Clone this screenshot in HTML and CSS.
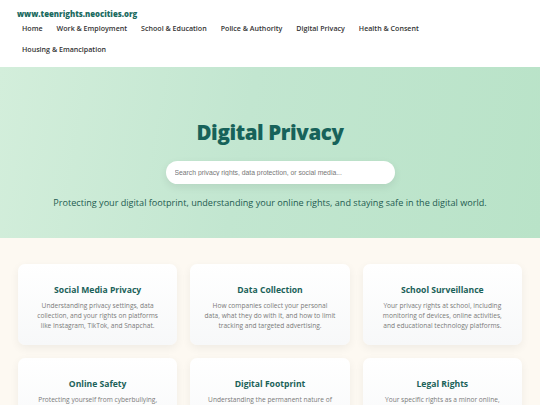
FILE: index.html
```html
<!DOCTYPE html>
<html lang="en">
<head>
<meta charset="utf-8">
<title>Digital Privacy - Teen Rights</title>
<link rel="stylesheet" href="styles.css">
</head>
<body>
<header class="site-header">
  <div class="logo">www.teenrights.neocities.org</div>
  <nav class="nav">
    <a href="#">Home</a>
    <a href="#">Work &amp; Employment</a>
    <a href="#">School &amp; Education</a>
    <a href="#">Police &amp; Authority</a>
    <a href="#">Digital Privacy</a>
    <a href="#">Health &amp; Consent</a>
    <a href="#">Housing &amp; Emancipation</a>
  </nav>
</header>
<section class="hero">
  <h1>Digital Privacy</h1>
  <div class="search"><input type="text" placeholder="Search privacy rights, data protection, or social media..."></div>
  <p class="lead">Protecting your digital footprint, understanding your online rights, and staying safe in the digital world.</p>
</section>
<main class="content">
  <div class="grid">
    <div class="card"><h3>Social Media Privacy</h3><p>Understanding privacy settings, data collection, and your rights on platforms like Instagram, TikTok, and Snapchat.</p></div>
    <div class="card"><h3>Data Collection</h3><p>How companies collect your personal data, what they do with it, and how to limit tracking and targeted advertising.</p></div>
    <div class="card"><h3>School Surveillance</h3><p>Your privacy rights at school, including monitoring of devices, online activities, and educational technology platforms.</p></div>
    <div class="card"><h3>Online Safety</h3><p>Protecting yourself from cyberbullying, online predators, scams, and other digital threats.</p></div>
    <div class="card"><h3>Digital Footprint</h3><p>Understanding the permanent nature of online content and how it can affect your future.</p></div>
    <div class="card"><h3>Legal Rights</h3><p>Your specific rights as a minor online, including COPPA protections and data deletion.</p></div>
  </div>
</main>
</body>
</html>
```
FILE: styles.css
```css
* { box-sizing: border-box; }
html, body { margin: 0; padding: 0; }
body {
  font-family: "Open Sans", "DejaVu Sans", sans-serif;
  background: #fdf9f2;
  color: #333;
}
.site-header {
  background: #fff;
  height: 67px;
  padding: 8px 0 0 17px;
}
.logo {
  font-size: 7.8px;
  font-weight: 800;
  color: #1b6b5f;
  line-height: 12px;
}
.nav {
  display: flex;
  flex-wrap: wrap;
  width: 500px;
  margin-left: -2px;
  margin-top: -2px;
}
.nav a {
  font-size: 7.1px;
  font-weight: 600;
  color: #333;
  text-decoration: none;
  padding: 4px 7px;
  line-height: 13px;
}
.hero {
  height: 171px;
  background: linear-gradient(100deg, #d3eedb 0%, #c2e6d0 45%, #b9e3c8 100%);
  text-align: center;
  padding-top: 50px;
}
.hero h1 {
  margin: 0;
  font-size: 20.5px;
  font-weight: 800;
  color: #17625a;
  line-height: 30px;
  letter-spacing: -0.4px;
}
.search {
  display: flex;
  justify-content: center;
  margin-top: 14px;
}
.search input {
  width: 229px;
  height: 23px;
  margin-left: 20px;
  border: none;
  border-radius: 12px;
  background: #fff;
  box-shadow: 0 3px 8px rgba(0,0,0,0.08);
  padding: 0 9px;
  font-family: "Liberation Sans", Arial, sans-serif;
  font-size: 6.8px;
  color: #555;
  outline: none;
}
.search input::placeholder { color: #777; }
.lead {
  margin: 13px 0 0;
  font-size: 9.1px;
  color: #1e5b50;
  line-height: 12px;
}
.content {
  padding: 26px 18px 20px;
}
.grid {
  display: grid;
  grid-template-columns: repeat(3, 1fr);
  gap: 13px 13px;
}
.card {
  background: linear-gradient(180deg, #ffffff 0%, #f7f8f9 100%);
  border-radius: 7px;
  box-shadow: 0 3px 10px rgba(0,0,0,0.06);
  height: 81px;
  padding: 20px 14px 0;
  text-align: center;
}
.card h3 {
  margin: 0;
  font-size: 8.6px;
  font-weight: 700;
  color: #1b6259;
  line-height: 12px;
}
.card p {
  margin: 5px 0 0;
  font-size: 6.6px;
  color: #7a7a7a;
  line-height: 10px;
}
```
